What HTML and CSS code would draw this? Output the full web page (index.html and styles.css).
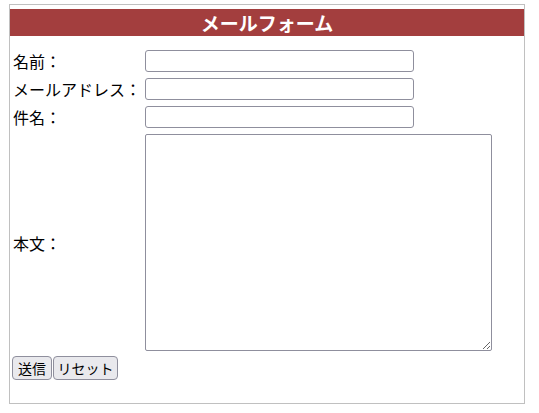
FILE: index.html
```html
<!DOCTYPE html>
<html lang="ja">
<head>
<meta charset="utf-8">
<title>メールフォーム</title>
<link rel="stylesheet" href="styles.css">
</head>
<body>
<form class="mail-form">
  <h1 class="form-title">メールフォーム</h1>
  <div class="fields">
    <label class="field-label" for="name">名前：</label>
    <input class="text-input" type="text" id="name">
    <label class="field-label" for="mail">メールアドレス：</label>
    <input class="text-input" type="text" id="mail">
    <label class="field-label" for="subject">件名：</label>
    <input class="text-input" type="text" id="subject">
    <label class="field-label" for="body">本文：</label>
    <textarea class="text-area" id="body"></textarea>
  </div>
  <div class="actions">
    <button class="btn btn-send" type="submit">送信</button>
    <button class="btn btn-reset" type="reset">リセット</button>
  </div>
</form>
</body>
</html>
```

FILE: styles.css
```css
html, body {
  margin: 0;
  padding: 0;
  background: #ffffff;
}

body {
  font-family: "Noto Sans CJK JP", "Noto Sans", sans-serif;
  font-size: 16px;
  color: #000;
}

.mail-form {
  box-sizing: border-box;
  width: 516px;
  height: 400px;
  margin: 4px 0 0 9px;
  border: 1px solid #c0c0c0;
  padding-top: 4px;
}

.form-title {
  margin: 0;
  height: 27px;
  line-height: 27px;
  background: #a33e3e;
  color: #fff;
  font-size: 19px;
  font-weight: bold;
  text-align: center;
}

.fields {
  display: grid;
  grid-template-columns: 132px auto;
  justify-content: start;
  align-items: center;
  row-gap: 6px;
  margin-top: 14px;
  padding-left: 3px;
}

.field-label {
  line-height: 22px;
  white-space: nowrap;
}

.text-input {
  box-sizing: border-box;
  width: 269px;
  height: 22px;
  margin: 0;
  border: 1px solid #8f8f9d;
  border-radius: 3px;
  padding: 1px 4px;
  font: inherit;
  background: #fff;
}

.text-area {
  box-sizing: border-box;
  width: 347px;
  height: 217px;
  margin: 0;
  border: 1px solid #8f8f9d;
  border-radius: 2px;
  padding: 2px;
  font: inherit;
  background: #fff;
  display: block;
}

.actions {
  display: flex;
  gap: 1px;
  margin-top: 5px;
  padding-left: 2px;
}

.btn {
  box-sizing: border-box;
  height: 24px;
  margin: 0;
  padding: 0;
  border: 1px solid #8f8f9d;
  border-radius: 4px;
  background: #e9e9ed;
  color: #000;
  font-family: "Noto Sans CJK JP", "Noto Sans", sans-serif;
  font-size: 14px;
  line-height: 20px;
}

.btn-send {
  width: 40px;
}

.btn-reset {
  width: 65px;
}
```
